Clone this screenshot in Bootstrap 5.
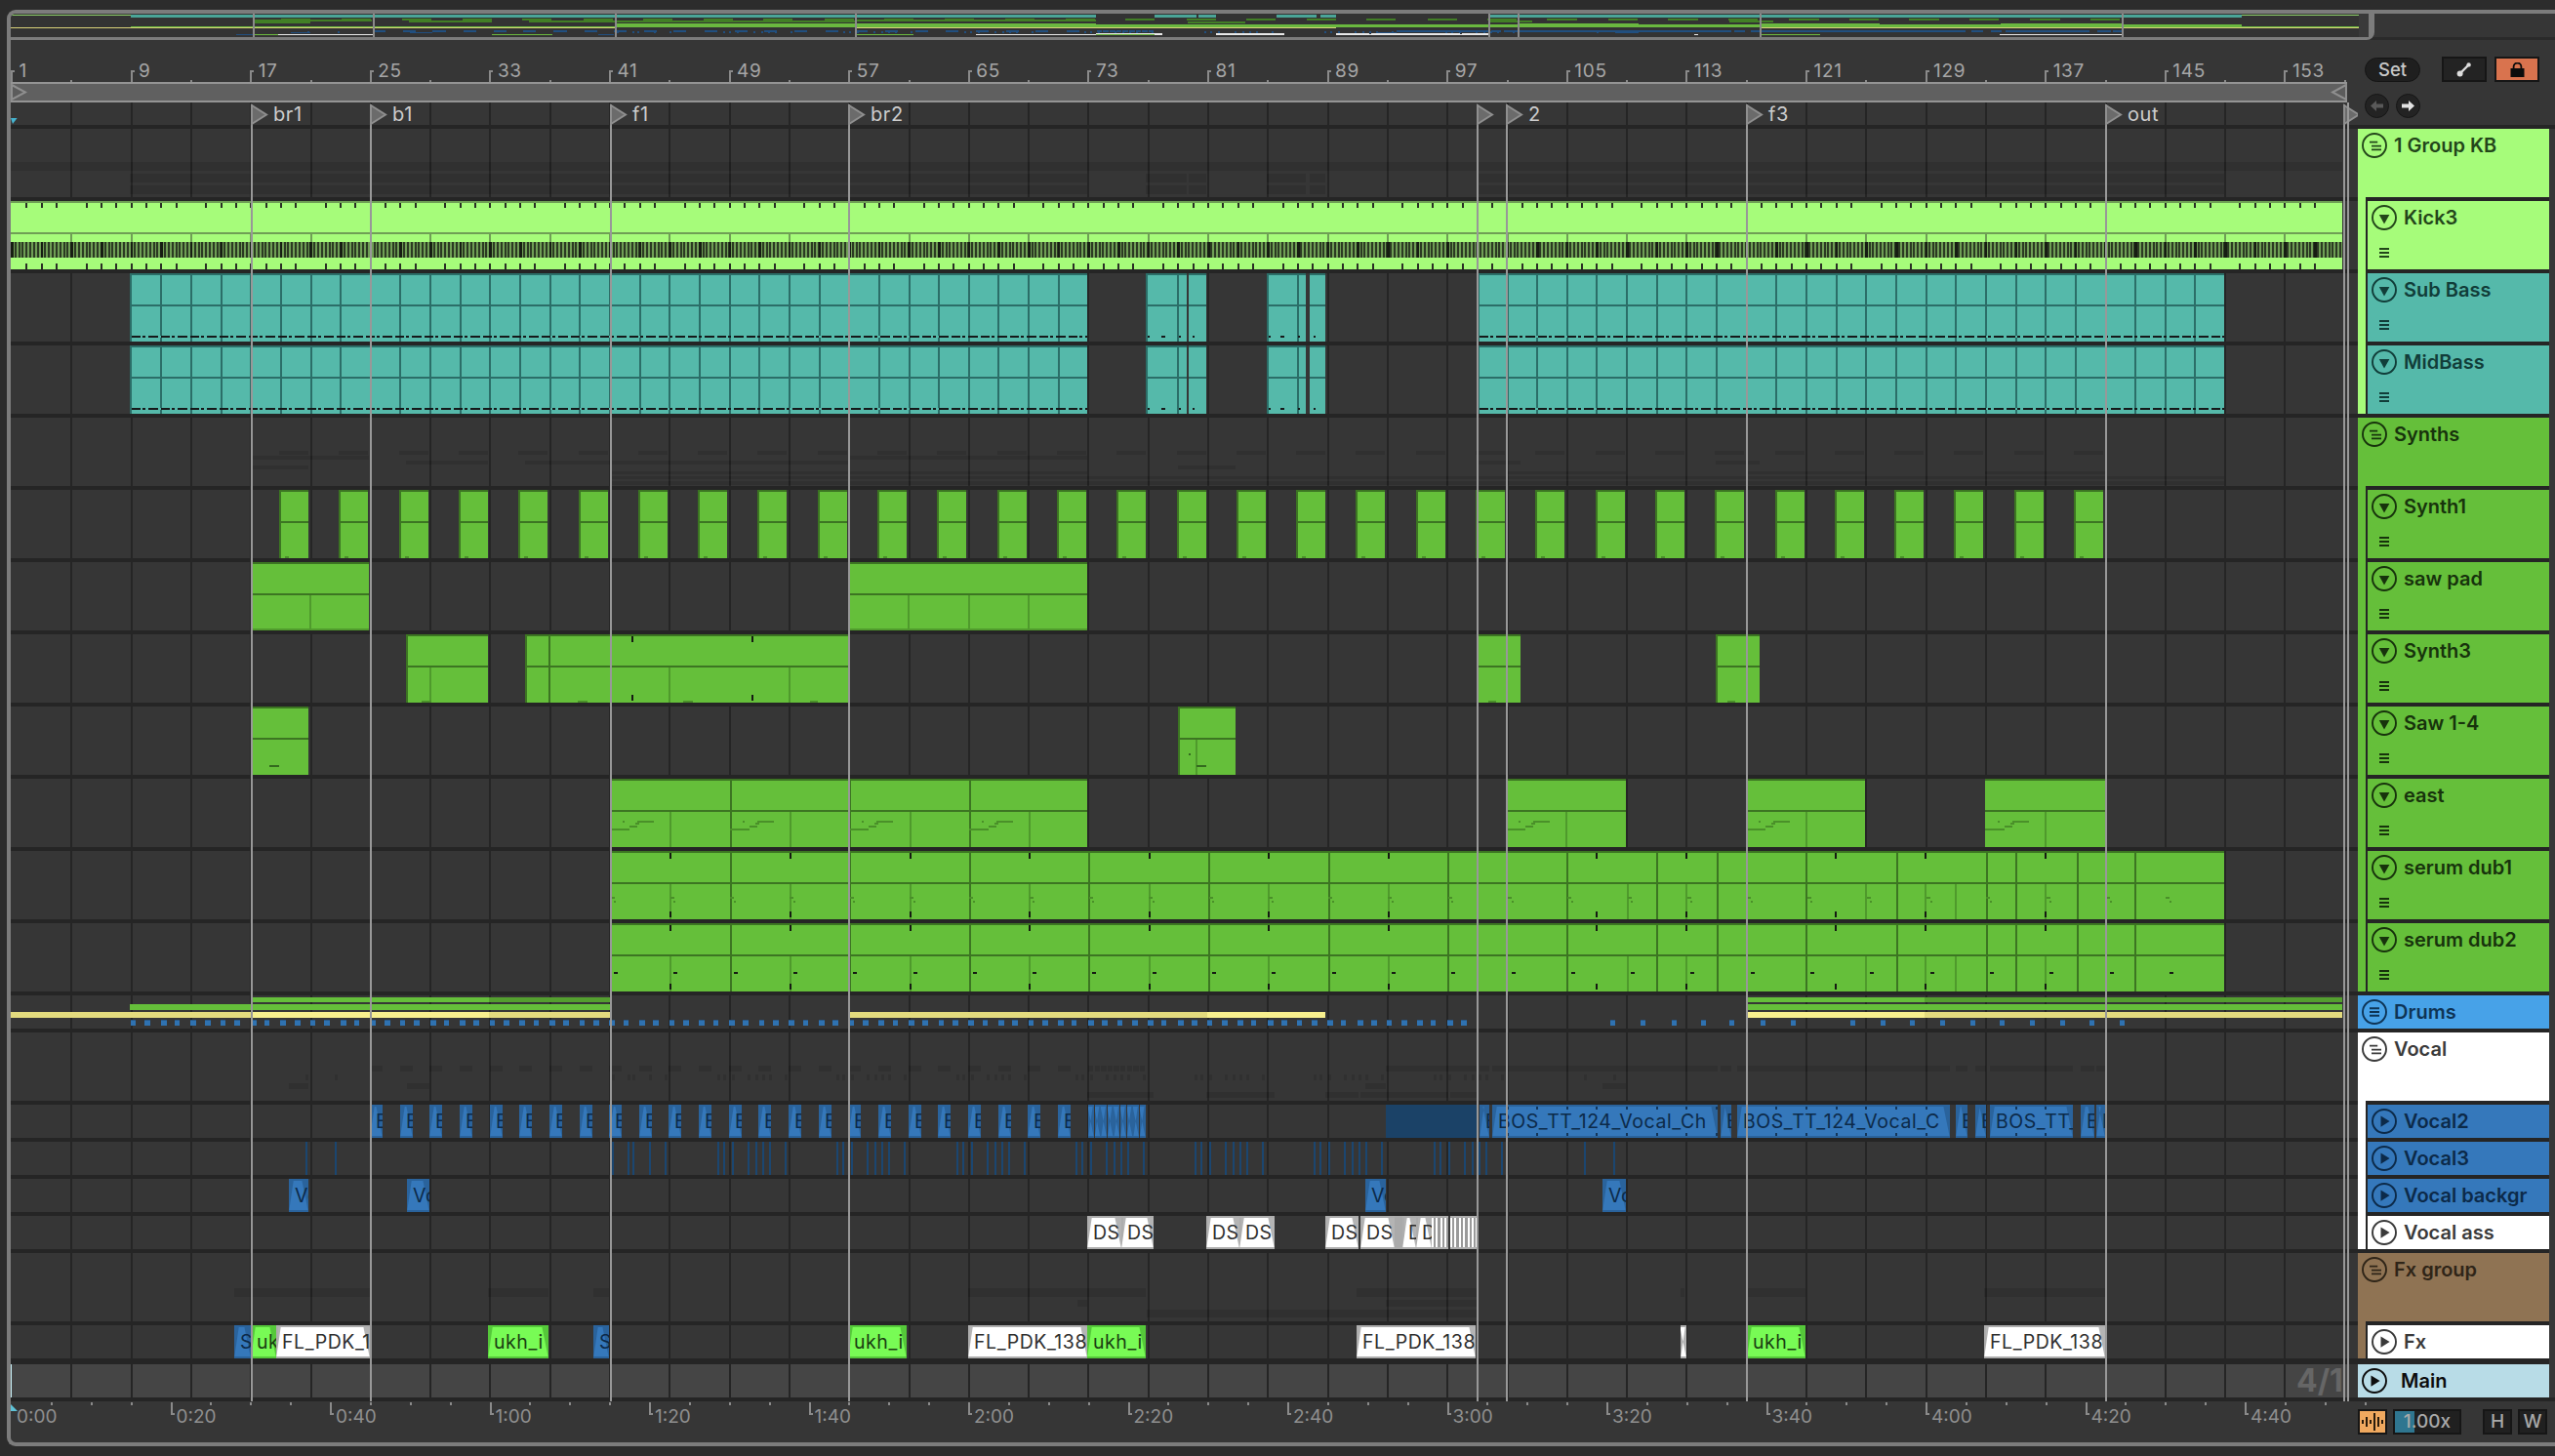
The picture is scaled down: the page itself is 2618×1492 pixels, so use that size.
<!doctype html>
<html lang="en">
<head>
<meta charset="utf-8">
<title>Arrangement</title>
<link href="https://cdn.jsdelivr.net/npm/bootstrap@5.3.0/dist/css/bootstrap.min.css" rel="stylesheet">
<style>
html,body{margin:0;background:#2c2c2c;overflow:hidden}
body{font-family:"Inter","Liberation Sans",sans-serif;width:2618px;height:1492px}
.shell{margin:10px 0 0 7px;width:2611px;height:1472px;border:solid #7c7c7c;border-width:4px 0 4px 4px;border-radius:9px 0 0 9px;background:#363636;overflow:hidden}
.ovw{height:27px;border-bottom:3px solid #2a2a2a;flex:none}
.ovw-in{height:27px;width:2422px;border-bottom:3px solid #7c7c7c;border-right:4px solid #7c7c7c;border-bottom-right-radius:8px;background:#333;overflow:visible}
.ovw-in .ov{position:absolute}
.ov-lime{background:#8fd26c}.ov-teal{background:#4aa598}.ov-green{background:#427f26}.ov-blue{background:#214f7f}.ov-white{background:#e8e8e8}.ov-fx{background:#6ab83f}.ov-yel{background:#d9d27a}.ov-loc{background:#8a8a8a;width:2px;top:0;height:24px}
.ov-grip{right:0;top:0;width:12px;height:24px;border-right:2px solid #7c7c7c;background:#3a3a3a;z-index:1}
.body-row{height:1437px}
.arr{width:2405px;flex:none}
.rul{height:43px;flex:none;color:#a6a6a6;font-size:19px;line-height:22px;letter-spacing:.7px}
.rul-t,.rul-h,.rul-f,.tim-t,.tim-m,.tim-f{position:absolute;background:#8a8a8a}
.rul-t{width:2px;height:12px;top:31px}.rul-f{width:4px;height:2px;top:31px}.rul-h{width:2px;height:2px;top:41px}
.rul-n{position:absolute;top:21px;white-space:nowrap}
.lp{height:21px;flex:none;background:#606060;border-top:2px solid #949494;border-bottom:2px solid #949494;width:2394px}
.lp svg{position:absolute;top:0}
.lanes{height:1331px;flex:none;overflow:hidden;background:#363636}
.grd{inset:0;z-index:0}
.gl{position:absolute;top:0;bottom:0;width:2px;background:#252525}
.locstrip{height:27px;border-bottom:4px solid #252525;z-index:1}
.lane{z-index:1;border-bottom:4px solid #252525}
.lane-l{height:74px}.lane-s{height:38px}.lane-x{height:40px;border-bottom-width:6px}
.loc-n{position:absolute;top:2px;font-size:20px;line-height:20px;letter-spacing:.6px;color:#cdcdcd;white-space:nowrap;padding:0 2px}
.loc-t{position:absolute;top:2px;width:18px;height:21px;overflow:visible}
.over{inset:0;z-index:5;pointer-events:none}
.ll{position:absolute;top:2px;bottom:0;width:2px;background:#989898}
.ll-end{top:-21px}
.clp{position:absolute;top:0;bottom:0;overflow:hidden}
.mk{position:absolute}
.k-bg{background:#a6fc7a;box-shadow:inset 0 2px 0 #6f9f55}
.k-l{background:#6f9f55}.k-tk{background:#2a2f25}
.k-wave{background:repeating-linear-gradient(90deg,#161d12 0 2.6px,transparent 2.6px 30.65px),repeating-linear-gradient(90deg,#2b3a22 0 2px,#6f9f55 2px 3.83px)}
.t-bg{background:#55b9aa;box-shadow:inset 2px 2px 0 #2b6e68}
.t-l{background:#2b6e68}.t-d{background:#16191a}.t-dk{background:#2c6a64}
.t-dash{background:repeating-linear-gradient(90deg,#15191a 0 9px,#55b9aa 9px 11px,#15191a 11px 14px,#55b9aa 14px 17px,#15191a 17px 27px,#55b9aa 27px 30px)}
.g-bg{background:#65bf3a;box-shadow:inset 2px 2px 0 #3c7522}
.g-bb{box-shadow:inset 0 2px 0 #3c7522,inset 0 -2px 0 #519c2d}
.g-nl{box-shadow:inset 0 2px 0 #3c7522}
.g-l{background:#3c7522}.g-h{background:#4f9a2c}.g-k{background:#151a12}.g-d{background:#336a1e}.g-f{background:#4a9029}
.ghost{position:absolute;background:rgba(0,0,0,.11)}
.d-yel{background:#e3db7e}.d-yb{background:#f8f08e}.d-gn{background:#65bf3a}.d-gd{background:#549f2f}.d-bl{background:#2f72b1;box-shadow:inset 0 1px 0 #27598a}
.au{font-size:19.5px;letter-spacing:.55px;line-height:30px;white-space:nowrap;padding-left:6px;border:solid;border-width:2px 0}
.au::before{content:"";position:absolute;inset:-2px 0;clip-path:polygon(5px 0,calc(100% - 7px) 0,100% 100%,0 100%)}
.au span{position:relative}
.au-b{background:#2a639c;border-color:#2a639c;color:#0c2a49}.au-b::before{background:#3578bb}
.au-w{background:#b4b4b4;border-color:#adadad;color:#2f2f2f;box-shadow:inset 2px 0 0 #adadad}.au-w::before{background:#fff}
.au-g{background:#55c83a;border-color:#55c83a;color:#1a3d12}.au-g::before{background:#78fb55}
.au-s{padding:0;background:repeating-linear-gradient(90deg,#fff 0 2px,#9a9a9a 2px 4.4px);border-color:#adadad}
.au-s::before{display:none}
.au-gy{background:#aaa;border-color:#aaa;padding:0}.au-gy::before{display:none}
.v-block{background:#1b4267}
.v-thin{background:#1b4670}
.v-tk{background:#14365a}
.main-in{left:0;top:0;height:34px;width:2395px;background:#454545}
.sig{position:absolute;top:-1px;font-size:32px;line-height:36px;font-weight:700;color:#666;white-space:nowrap}
.cur{left:-1px;top:0;width:2px;height:34px;background:#c9f3fb}
.tim{height:42px;flex:none;color:#8f8f8f;font-size:19px}
.tim-t{width:2px;height:13px;top:1px}.tim-f{width:4px;height:2px;top:12px}.tim-m{width:2px;height:3px;top:1px}
.tim-n{position:absolute;top:6px;line-height:20px;white-space:nowrap}
.cur-tri{position:absolute;left:-1px;top:2px;width:8px;height:8px}
.sid{width:202px;flex:none;background:#252525}
.sid-top{height:91px;flex:none;background:#363636;border-bottom:4px solid #252525;padding:17px 0 0 7px}
.pill-set{width:57px;height:25px;border-radius:13px;background:#1f1f1f;border:1px solid #151515;color:#c8c8c8;font-size:18.5px;font-weight:500;line-height:23px;text-align:center}
.sq-btn{width:46px;height:26px;background:#232323;border:2px solid #161616;margin-left:8px}
.sq-first{margin-left:22px}
.sq-lock{background:#d9734e}
.rnd{width:25px;height:25px;border-radius:50%;background:#232323;border:1px solid #161616;margin-right:7px}
.nav-row{margin-top:12px}
.tlist{border-right:6px solid #363636;flex:1 1 auto;min-height:0;display:flex;flex-direction:column}
.tg{background:var(--c);margin-bottom:4px}
.th{background:var(--c);color:var(--t);font-size:20px;font-weight:600;line-height:24px;position:relative}
.th-l{height:70px}.th-s{height:34px}
.th-row{height:34px;padding-left:4px;gap:7px}
.th-ch{height:34px;padding-left:4px;gap:7px}
.th-ic{width:26px;height:26px;flex:none}
.th-mn{width:10px;height:10px;position:absolute;left:12px;top:48px}
.ch{margin-left:8px;border-left:2px solid #252525;border-top:4px solid #252525}
.ch.th-l{height:74px}.ch.th-s{height:38px}
.c-lime{--c:#a6fc7a;--t:#23461a}.c-teal{--c:#55b9aa;--t:#113d39}.c-green{--c:#65bf3a;--t:#17330c}.c-sky{--c:#47a2e8;--t:#0e3455}.c-white{--c:#fff;--t:#3a3a3a}.c-blue{--c:#3578bb;--t:#0c2a49}.c-brown{--c:#8f7353;--t:#2f2518}.c-main{--c:#b8dce7;--t:#0d0d0d}
.gap-mn{margin-bottom:0}
.th-mainp{gap:14px}
.sid-bot{height:46px;flex:none;background:#363636;border-top:4px solid #252525;padding-top:8px}
.ft-btn{height:26px;background:#202020;border:2px solid #161616;color:#a9a9a9;font-size:19px;font-weight:500;line-height:22px;text-align:center;position:relative;overflow:hidden}
.ft-wave{width:30px;background:#f0a95f}
.ft-rate{width:70px;margin-left:6px}
.ft-fill{left:0;top:0;bottom:0;width:20px;background:#2f7690}
.ft-rate span{position:relative}
.ft-h{width:30px;margin-left:22px}
.ft-w{width:30px;margin-left:6px}
</style>
</head>
<body>
<svg class="d-none" aria-hidden="true">
<symbol id="i-grp" viewBox="0 0 26 26"><circle cx="13" cy="13" r="12" fill="none" stroke="currentColor" stroke-width="1.9"/><path d="M8 9.6h8.2M10 13.6h10M10 17.4h10" fill="none" stroke="currentColor" stroke-width="1.9"/></symbol>
<symbol id="i-drm" viewBox="0 0 26 26"><circle cx="13" cy="13" r="12" fill="none" stroke="currentColor" stroke-width="1.9"/><path d="M8 9.3h10M8 13h10M8 16.7h10" fill="none" stroke="currentColor" stroke-width="1.9"/></symbol>
<symbol id="i-dn" viewBox="0 0 26 26"><circle cx="13" cy="13" r="12" fill="none" stroke="currentColor" stroke-width="1.9"/><path d="M7.8 10h10.6L13 19.6z" fill="currentColor"/></symbol>
<symbol id="i-rt" viewBox="0 0 26 26"><circle cx="13" cy="13" r="12" fill="none" stroke="currentColor" stroke-width="1.9"/><path d="M9.5 7.4v11.4L18.6 13z" fill="currentColor"/></symbol>
<symbol id="i-mn" viewBox="0 0 10 10"><path d="M0 1h10M0 5h10M0 9h10" fill="none" stroke="currentColor" stroke-width="2"/></symbol>
</svg>

<div class="shell d-flex flex-column">
  <div class="ovw flex-shrink-0"><div class="ovw-in position-relative" id="ovw"><div class="ov-grip position-absolute"></div></div></div>
  <div class="body-row d-flex">
    <div class="arr d-flex flex-column">
      <div class="rul position-relative" id="rul"></div>
      <div class="lp position-relative">
        <svg class="lp-a" width="17" height="17" viewBox="0 0 17 17" style="left:0"><path d="M1 1l14 7.5L1 16z" fill="#5c5c5c" stroke="#8f8f8f" stroke-width="2"/></svg>
        <svg class="lp-b" width="17" height="17" viewBox="0 0 17 17" style="right:0"><path d="M16 1L2 8.5 16 16z" fill="#5c5c5c" stroke="#8f8f8f" stroke-width="2"/></svg>
      </div>
      <div class="lanes position-relative" id="lanes">
        <div class="grd position-absolute" id="grd"></div>
        <div class="locstrip position-relative" id="locs">
          <svg class="position-absolute" style="left:0;top:16px" width="7" height="6" viewBox="0 0 7 6"><path d="M0 0h6.6L2 6z" fill="#45b4d0"/></svg>
        </div>
      </div>
      <div class="tim position-relative" id="tim">
        <svg class="cur-tri" viewBox="0 0 8 8"><path d="M0 0l8 8H0z" fill="#5fc3d8"/></svg>
      </div>
    </div>
    <div class="sid d-flex flex-column">
      <div class="sid-top">
        <div class="d-flex align-items-center">
          <div class="pill-set">Set</div>
          <div class="sq-btn sq-first d-flex align-items-center justify-content-center"><svg width="16" height="16" viewBox="0 0 16 16"><path d="M3.5 12.5l9-9" stroke="#ddd" stroke-width="2.4"/><circle cx="3.6" cy="12.4" r="3" fill="#ddd"/><circle cx="12.6" cy="3.4" r="2.2" fill="#ddd"/></svg></div>
          <div class="sq-btn sq-lock d-flex align-items-center justify-content-center"><svg width="15" height="15" viewBox="0 0 15 15"><path d="M0.5 6h14v9H.5z" fill="#0c0c0c"/><path d="M3.6 6V4.4a3.9 3.9 0 0 1 7.8 0V6" fill="none" stroke="#0c0c0c" stroke-width="1.8"/></svg></div>
        </div>
        <div class="nav-row d-flex">
          <div class="rnd d-flex align-items-center justify-content-center"><svg width="15" height="13" viewBox="0 0 15 13"><path d="M1 6.5L7 1v3.5h7v4H7V12z" fill="#595959"/></svg></div>
          <div class="rnd d-flex align-items-center justify-content-center"><svg width="15" height="13" viewBox="0 0 15 13"><path d="M14 6.5L8 1v3.5H1v4h7V12z" fill="#e2e2e2"/></svg></div>
        </div>
      </div>
      <div class="tlist">
        <div class="tg c-lime">
          <div class="th th-l"><div class="th-row d-flex align-items-center"><svg class="th-ic"><use href="#i-grp"/></svg><span>1 Group KB</span></div></div>
          <div class="ch th th-l"><div class="th-ch d-flex align-items-center"><svg class="th-ic"><use href="#i-dn"/></svg><span>Kick3</span></div><svg class="th-mn"><use href="#i-mn"/></svg></div>
          <div class="ch th th-l c-teal"><div class="th-ch d-flex align-items-center"><svg class="th-ic"><use href="#i-dn"/></svg><span>Sub Bass</span></div><svg class="th-mn"><use href="#i-mn"/></svg></div>
          <div class="ch th th-l c-teal"><div class="th-ch d-flex align-items-center"><svg class="th-ic"><use href="#i-dn"/></svg><span>MidBass</span></div><svg class="th-mn"><use href="#i-mn"/></svg></div>
        </div>
        <div class="tg c-green">
          <div class="th th-l"><div class="th-row d-flex align-items-center"><svg class="th-ic"><use href="#i-grp"/></svg><span>Synths</span></div></div>
          <div class="ch th th-l"><div class="th-ch d-flex align-items-center"><svg class="th-ic"><use href="#i-dn"/></svg><span>Synth1</span></div><svg class="th-mn"><use href="#i-mn"/></svg></div>
          <div class="ch th th-l"><div class="th-ch d-flex align-items-center"><svg class="th-ic"><use href="#i-dn"/></svg><span>saw pad</span></div><svg class="th-mn"><use href="#i-mn"/></svg></div>
          <div class="ch th th-l"><div class="th-ch d-flex align-items-center"><svg class="th-ic"><use href="#i-dn"/></svg><span>Synth3</span></div><svg class="th-mn"><use href="#i-mn"/></svg></div>
          <div class="ch th th-l"><div class="th-ch d-flex align-items-center"><svg class="th-ic"><use href="#i-dn"/></svg><span>Saw 1-4</span></div><svg class="th-mn"><use href="#i-mn"/></svg></div>
          <div class="ch th th-l"><div class="th-ch d-flex align-items-center"><svg class="th-ic"><use href="#i-dn"/></svg><span>east</span></div><svg class="th-mn"><use href="#i-mn"/></svg></div>
          <div class="ch th th-l"><div class="th-ch d-flex align-items-center"><svg class="th-ic"><use href="#i-dn"/></svg><span>serum dub1</span></div><svg class="th-mn"><use href="#i-mn"/></svg></div>
          <div class="ch th th-l"><div class="th-ch d-flex align-items-center"><svg class="th-ic"><use href="#i-dn"/></svg><span>serum dub2</span></div><svg class="th-mn"><use href="#i-mn"/></svg></div>
        </div>
        <div class="tg c-sky">
          <div class="th th-s"><div class="th-row d-flex align-items-center"><svg class="th-ic"><use href="#i-drm"/></svg><span>Drums</span></div></div>
        </div>
        <div class="tg c-white">
          <div class="th th-l"><div class="th-row d-flex align-items-center"><svg class="th-ic"><use href="#i-grp"/></svg><span>Vocal</span></div></div>
          <div class="ch th th-s c-blue"><div class="th-ch d-flex align-items-center"><svg class="th-ic"><use href="#i-rt"/></svg><span>Vocal2</span></div></div>
          <div class="ch th th-s c-blue"><div class="th-ch d-flex align-items-center"><svg class="th-ic"><use href="#i-rt"/></svg><span>Vocal3</span></div></div>
          <div class="ch th th-s c-blue"><div class="th-ch d-flex align-items-center"><svg class="th-ic"><use href="#i-rt"/></svg><span>Vocal backgr</span></div></div>
          <div class="ch th th-s c-white"><div class="th-ch d-flex align-items-center"><svg class="th-ic"><use href="#i-rt"/></svg><span>Vocal ass</span></div></div>
        </div>
        <div class="tg c-brown gap-mn">
          <div class="th th-l"><div class="th-row d-flex align-items-center"><svg class="th-ic"><use href="#i-grp"/></svg><span>Fx group</span></div></div>
          <div class="ch th th-s c-white"><div class="th-ch d-flex align-items-center"><svg class="th-ic"><use href="#i-rt"/></svg><span>Fx</span></div></div>
        </div>
        <div class="tg c-main gap-mn mt-auto">
          <div class="th th-s"><div class="th-row th-mainp d-flex align-items-center"><svg class="th-ic"><use href="#i-rt"/></svg><span>Main</span></div></div>
        </div>
      </div>
      <div class="sid-bot d-flex">
        <div class="ft-btn ft-wave d-flex align-items-center justify-content-center"><svg width="22" height="20" viewBox="0 0 22 20"><path d="M1 8v4M5 5v10M9 8v4M13 1v18M17 5v10M21 8v4" stroke="#2a1c0c" stroke-width="2"/></svg></div>
        <div class="ft-btn ft-rate"><div class="ft-fill position-absolute"></div><span>1.00x</span></div>
        <div class="ft-btn ft-h">H</div>
        <div class="ft-btn ft-w">W</div>
      </div>
    </div>
  </div>
</div>

<script>
(function(){
const G=61.3,B=15.325,H=30.65;
const lanes=document.getElementById('lanes'),ovw=document.getElementById('ovw');
function el(p,c,x,y,w,h,t){const d=document.createElement('div');d.className=c;const s=d.style;if(x!=null)s.left=x+'px';if(y!=null)s.top=y+'px';if(w!=null)s.width=w+'px';if(h!=null)s.height=h+'px';if(t!=null)d.textContent=t;p.append(d);return d;}

/* ruler */
const rul=document.getElementById('rul');
for(let k=0;k<=19;k++){const x=k*122.6;el(rul,'rul-t',x,null);el(rul,'rul-f',x,null);el(rul,'rul-n',x+8.5,null,null,null,String(1+8*k));el(rul,'rul-h',x+G,null);}
/* time ruler */
const tim=document.getElementById('tim');
for(let k=0;k<=14;k++){const x=k*163.5;if(k){el(tim,'tim-t',x,null);el(tim,'tim-f',x,null);}
 const m=Math.floor(k*20/60),s=k*20%60;el(tim,'tim-n',x+6,null,null,null,m+':'+String(s).padStart(2,'0'));
 for(let j=1;j<4;j++)el(tim,'tim-m',x+j*40.875,null);}

/* vertical grid */
const grd=document.getElementById('grd');
for(let k=1;k<=38;k++)el(grd,'gl',k*G);

/* lanes */
const defs=[['gkb','l'],['kick','l'],['sub','l'],['mid','l'],['syn','l'],['s1','l'],['pad','l'],['s3','l'],['s4','l'],['east','l'],['d1','l'],['d2','l'],['drm','s'],['voc','l'],['v2','s'],['v3','s'],['vb','s'],['va','s'],['fxg','l'],['fx','x'],['mn','s']];
const R={};let yy=132;
for(const [n,t] of defs){const d=document.createElement('div');d.className='lane position-relative lane-'+t;lanes.append(d);R[n]={e:d,top:yy,clips:[]};yy+=t==='l'?74:t==='s'?38:40;}
const ovRec=[];
function rec(n,x1,x2,c){R[n].clips.push([x1,x2]);if(c)ovRec.push([n,x1,x2,c]);}
function box(n,x1,x2,cls,ov){rec(n,x1,x2,ov);return el(R[n].e,'clp '+cls,x1-11,null,x2-x1);}

/* kick */
{const c=box('kick',11,2400,'k-bg',null);
 ovRec.push(['kick',11,133,'ov-lime'],['kick',2279,2400,'ov-lime']);
 el(c,'mk k-l',0,32,2389,2);
 for(let k=1;k<=38;k++)el(c,'mk k-l',k*G,34,2,8);
 el(c,'mk k-wave',0,42,2389,16);
 for(let k=1;k<155;k++){if(k%4==0&&k%8)continue;const x=k*B;el(c,'mk k-tk',x,2,2,5);el(c,'mk k-tk',x,64,2,6);}
}
/* teal */
function teal(n,x1,x2,dash){const c=box(n,x1,x2,'t-bg','ov-teal');el(c,'mk t-l',0,32,x2-x1,2);
 for(let k=0;k<80;k++){const x=11+k*H;if(x>x1+2&&x<x2-2)el(c,'mk t-l',x-x1,0,2,70);}
 if(dash===true)el(c,'mk t-dash',2,64,x2-x1-2,2);else for(const d of dash)el(c,'mk t-d',d[0]-x1,64,d[1],2);return c;}
for(const n of ['sub','mid']){
 teal(n,133,1114,true);
 teal(n,1174,1216,[[1176,2],[1190,4],[1208,2]]);
 el(R[n].e,'clp t-dk',1218-11,null,4);
 teal(n,1218,1236,[[1222,2]]).style.boxShadow='inset 0 2px 0 #2b6e68';
 teal(n,1298,1338,[[1300,2],[1312,4],[1330,2]]);
 el(R[n].e,'clp t-dk',1342-11,null,4);
 teal(n,1342,1358,[[1346,2]]).style.boxShadow='inset 0 2px 0 #2b6e68';
 teal(n,1514,2279,true);
}
/* green midi */
function mid(n,x1,x2,o){o=o||{};const c=box(n,x1,x2,'g-bg '+(o.cls||''),['east','d1','d2'].includes(n)?'ov-fx':'ov-green');el(c,'mk g-l',0,32,x2-x1,2);
 (o.full||[]).forEach(x=>el(c,'mk g-l',x-x1,0,2,70));
 (o.half||[]).forEach(x=>el(c,'mk g-h',x-x1,34,2,36));
 (o.tick||[]).forEach(x=>{el(c,'mk g-k',x-x1,2,2,6);el(c,'mk g-k',x-x1,62,2,6);});
 (o.marks||[]).forEach(m=>el(c,'mk '+(m[4]||'g-d'),m[0]-x1,m[1],m[2],m[3]));
 return c;}
for(let k=0;k<=30;k++){const x=Math.round(286+k*G);mid('s1',x,x+30,{marks:[[x+6,68,4,2,'g-f']]});}
mid('pad',257,378,{cls:'g-bb',half:[317]});mid('pad',869,1114,{cls:'g-bb',half:[930,992,1053]});
mid('s3',416,500,{half:[440],marks:[[432,68,10,2,'g-f']]});
mid('s3',538,869,{full:[562],half:[685,808],tick:[647,770],marks:[[592,68,10,2,'g-f'],[700,68,10,2,'g-f'],[830,68,8,2,'g-f']]});
mid('s3',1513,1558,{marks:[[1525,68,8,2,'g-f']]});mid('s3',1758,1803,{marks:[[1770,68,8,2,'g-f']]});
mid('s4',257,316,{cls:'g-nl',marks:[[276,60,10,2]]});
mid('s4',1207,1266,{half:[1225],marks:[[1226,60,10,2],[1218,48,2,2]]});
function eastMarks(x){return [[x,51,20,2,'g-f'],[x+13,43,2,2,'g-f'],[x+20,48,8,2,'g-f'],[x+26,45,4,2,'g-f'],[x+28,43,17,2,'g-f']];}
[[625,1114],[1543,1666],[1789,1911],[2034,2157]].forEach(([a,b])=>{const f=[],h=[],m=[];
 for(let x=a;x<b-5;x+=122.6){if(x>a)f.push(x);if(x+G<b-4)h.push(x+G);m.push(...eastMarks(x));}
 mid('east',a,b,{cls:'g-nl',full:f,half:h,marks:m.filter(q=>q[0]+q[2]<b)});});
for(const n of ['d1','d2']){const f=[],h=[],m=[];
 for(let x=625+122.6;x<1430;x+=122.6)f.push(x);
 for(let x=625+G;x<1430;x+=122.6)h.push(x);
 f.push(1483,1605,1697,1759,1850,1943,2035,2065,2128,2187);
 h.push(1667,1727,1911,1972,2003,2095,2003);
 const t=h.filter(x=>x<1440).concat([1635,1727,1880,1972,2095]);
 for(let x=625;x<2270;x+=G){if(n==='d1'){m.push([x+0.5,47,4,2,'g-f'],[x+4,51,2,2,'g-f']);}else m.push([x+4,50,4,2,'g-k']);}
 mid(n,625,2279,{cls:'g-nl',full:f,half:h,tick:t,marks:m});}

/* drums */
const D=R.drm.e;
function dr(c,x1,x2,y,h){el(D,'mk '+c,x1-11,y,x2-x1,h);}
rec('drm',11,625,'ov-yel');rec('drm',869,1358,'ov-yel');rec('drm',1790,2400,'ov-yel');
dr('d-gn',133,625,9,6);dr('d-gn',257,501,2,5);dr('d-gd',501,625,2,5);
dr('d-yel',11,257,17,6);dr('d-yb',257,501,17,6);dr('d-yel',501,625,17,6);
dr('d-yel',869,1237,17,6);dr('d-yb',1237,1358,17,6);
dr('d-gn',1790,2400,2,5);dr('d-gd',1972,2400,2,5);dr('d-gn',1790,2400,9,6);
dr('d-yb',1790,1972,17,6);dr('d-yel',1972,2400,17,6);
for(let k=0;k<90;k++){const x=133+k*B+(k%2?0:1);dr('d-bl',x,x+(k%3?6:5),25,6);}
[1650,1681,1713,1743,1772,1804,1835,1896,1927,1957,1988,2019,2049,2080,2111,2141,2172].forEach(x=>dr('d-bl',x,x+5,25,6));

/* vocals */
function au(n,x1,x2,cls,txt,ov){const c=box(n,x1,x2,'au '+cls,ov);if(txt){const s=document.createElement('span');s.textContent=txt;c.append(s);}return c;}
for(let x=379;x<1100;x+=H)au('v2',Math.round(x),Math.round(x)+13,'au-b','B','ov-blue');
for(let k=0;k<9;k++){const x=1115+k*6.6;au('v2',x,x+5.4,'au-b',null,'ov-blue');}
box('v2',1420,1513,'v-block','ov-blue');
au('v2',1516,1526,'au-b','B','ov-blue');
function bos(a,b,t){const c=au('v2',a,b,'au-b',t,'ov-blue');for(let x=11+Math.ceil((a-11)/H)*H;x<b;x+=H){el(c,'mk v-tk',x-a,-2,2,5);el(c,'mk v-tk',x-a,27,2,5);}}
bos(1529,1760,'BOS_TT_124_Vocal_Ch');au('v2',1763,1774,'au-b','B','ov-blue');bos(1780,1998,'BOS_TT_124_Vocal_C');au('v2',2004,2016,'au-b','B','ov-blue');au('v2',2024,2035,'au-b','B','ov-blue');bos(2039,2124,'BOS_TT_');au('v2',2132,2146,'au-b','B','ov-blue');au('v2',2148,2157,'au-b','B','ov-blue');
const thin=[313,343,627,643,648,665,681,1623,1653];
const ofs=[0,6,14.5,31,39,46,53,68.5];
[735,857,980,1102,1224,1346,1469].forEach(b=>ofs.forEach(o=>thin.push(b+o)));
thin.forEach(x=>box('v3',x,x+2,'v-thin','ov-blue'));
[[296,316],[417,440],[1399,1420],[1642,1666]].forEach(([a,b])=>au('vb',a,b,'au-b','Vo','ov-blue'));
[[1114,1149],[1149,1182],[1236,1270],[1270,1306],[1358,1392],[1394,1429]].forEach(([a,b])=>au('va',a,b,'au-w','DS','ov-white'));
box('va',1429,1437,'au au-gy','ov-white');au('va',1437,1451,'au-w','D','ov-white');au('va',1451,1467,'au-w','D','ov-white');
box('va',1467,1484,'au au-s','ov-white');box('va',1486,1513,'au au-s','ov-white');
/* fx */
au('fx',240,257,'au-b','S','ov-blue');au('fx',257,283,'au-g','uk','ov-fx');au('fx',283,379,'au-w','FL_PDK_1','ov-white');
au('fx',500,562,'au-g','ukh_i','ov-fx');au('fx',608,624,'au-b','S','ov-blue');
au('fx',869,929,'au-g','ukh_i','ov-fx');au('fx',992,1114,'au-w','FL_PDK_138','ov-white');au('fx',1114,1174,'au-g','ukh_i','ov-fx');
au('fx',1390,1512,'au-w','FL_PDK_138','ov-white');box('fx',1722,1726,'au au-w','ov-white');au('fx',1790,1850,'au-g','ukh_i','ov-fx');au('fx',2033,2157,'au-w','FL_PDK_138','ov-white');

/* group ghosts */
function ghosts(g,ch){const n=ch.length,st=34,sl=36/n;ch.forEach((c,i)=>R[c].clips.forEach(([a,b])=>{if(b-a<2.5&&n>1)b=a+3;el(R[g].e,'ghost',a-11,st+i*sl,b-a,sl*.72);}));}
ghosts('gkb',['kick','sub','mid']);
ghosts('syn',['s1','pad','s3','s4','east','d1','d2']);
ghosts('voc',['v2','v3','vb','va']);
[[240,379,36,9],[500,562,36,9],[608,624,36,9],[992,1174,36,9],[1390,1513,36,9],[1722,1726,36,9],[1790,1850,36,9],[2033,2157,36,9],[1104,1114,48,7],[1420,1513,48,7],[1175,1513,58,8]].forEach(g=>el(R.fxg.e,'ghost',g[0]-11,g[2],g[1]-g[0],g[3]));

/* main lane */
const M=R.mn.e;el(M,'main-in position-absolute');
for(let k=1;k<=38;k++)el(M,'gl',k*G);
el(M,'cur position-absolute');
el(M,'sig',2342,null,null,null,'4/1');

/* locators */
const locs=document.getElementById('locs');
const over=document.createElement('div');over.className='over position-absolute';lanes.append(over);
[[257,'br1'],[379,'b1'],[625,'f1'],[869,'br2'],[1513,''],[1543,'2'],[1789,'f3'],[2157,'out'],[2401,'']].forEach(([x,t])=>{
 const lx=x-11;el(over,'ll',lx);
 over.insertAdjacentHTML('beforeend','<svg class="loc-t" viewBox="0 0 18 21" style="left:'+lx+'px"><path d="M1 1l15 9.5L1 20z" fill="#6b6b6b" stroke="#8f8f8f" stroke-width="2"/></svg>');
 if(t)el(locs,'loc-n',lx+21,null,null,null,t);});
el(over,'ll ll-end',2394);

/* overview: compressed miniature of every lane */
const ovY={kick:1,sub:1.2,mid:2.6,s1:5,pad:6,s3:7.2,s4:8.4,east:10.2,d1:11.2,d2:12.2,drm:14,v2:17.2,v3:18,vb:18.8,va:20,fx:20.6};
ovRec.forEach(([n,a,b,c])=>{el(ovw,'ov '+c,(a-11)*1.008,ovY[n],Math.max(1,(b-a)*1.008),n==='kick'?1:n==='drm'?1.2:1.5);});
[[133,625],[1790,2400]].forEach(([a,b])=>el(ovw,'ov ov-fx',(a-11)*1.008,12.6,(b-a)*1.008,1.4));
[257,379,625,869,1513,1543,1789,2157].forEach(x=>el(ovw,'ov ov-loc',(x-11)*1.008));
})();
</script>
<script src="https://cdn.jsdelivr.net/npm/bootstrap@5.3.0/dist/js/bootstrap.bundle.min.js"></script>
</body>
</html>
